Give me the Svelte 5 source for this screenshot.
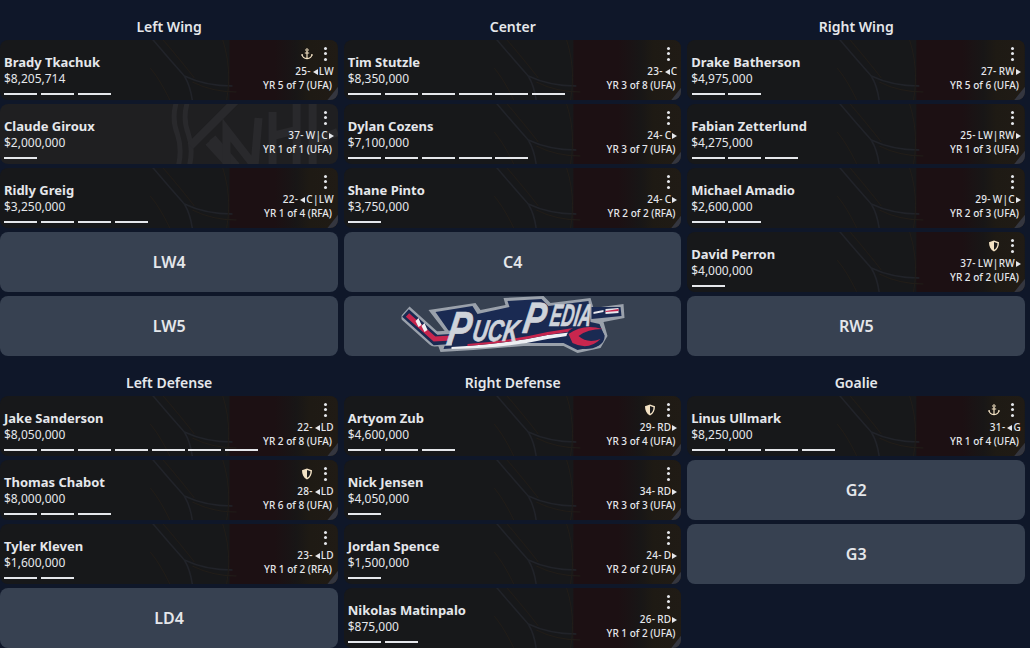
<script>
  const P = (name, salary, age, pos, dir, contract, bars, icon = '', nhl = false) => ({ name, salary, age, pos, dir, contract, bars, icon, nhl });
  const E = (slot) => ({ slot });
  const sections = [
    [
      { title: 'Left Wing', items: [
        P('Brady Tkachuk', '$8,205,714', 25, 'LW', 'l', 'YR 5 of 7 (UFA)', 3, 'anchor'),
        P('Claude Giroux', '$2,000,000', 37, 'W|C', 'r', 'YR 1 of 1 (UFA)', 1, '', true),
        P('Ridly Greig', '$3,250,000', 22, 'C|LW', 'l', 'YR 1 of 4 (RFA)', 4),
        E('LW4'), E('LW5') ] },
      { title: 'Center', items: [
        P('Tim Stutzle', '$8,350,000', 23, 'C', 'l', 'YR 3 of 8 (UFA)', 6),
        P('Dylan Cozens', '$7,100,000', 24, 'C', 'r', 'YR 3 of 7 (UFA)', 5),
        P('Shane Pinto', '$3,750,000', 24, 'C', 'r', 'YR 2 of 2 (RFA)', 1),
        E('C4'), { logo: true } ] },
      { title: 'Right Wing', items: [
        P('Drake Batherson', '$4,975,000', 27, 'RW', 'r', 'YR 5 of 6 (UFA)', 2),
        P('Fabian Zetterlund', '$4,275,000', 25, 'LW|RW', 'r', 'YR 1 of 3 (UFA)', 3),
        P('Michael Amadio', '$2,600,000', 29, 'W|C', 'r', 'YR 2 of 3 (UFA)', 2),
        P('David Perron', '$4,000,000', 37, 'LW|RW', 'r', 'YR 2 of 2 (UFA)', 1, 'shield'),
        E('RW5') ] }
    ],
    [
      { title: 'Left Defense', items: [
        P('Jake Sanderson', '$8,050,000', 22, 'LD', 'l', 'YR 2 of 8 (UFA)', 7),
        P('Thomas Chabot', '$8,000,000', 28, 'LD', 'l', 'YR 6 of 8 (UFA)', 3, 'shield'),
        P('Tyler Kleven', '$1,600,000', 23, 'LD', 'l', 'YR 1 of 2 (RFA)', 2),
        E('LD4') ] },
      { title: 'Right Defense', items: [
        P('Artyom Zub', '$4,600,000', 29, 'RD', 'r', 'YR 3 of 4 (UFA)', 3, 'shield'),
        P('Nick Jensen', '$4,050,000', 34, 'RD', 'r', 'YR 3 of 3 (UFA)', 1),
        P('Jordan Spence', '$1,500,000', 24, 'D', 'r', 'YR 2 of 2 (UFA)', 1),
        P('Nikolas Matinpalo', '$875,000', 26, 'RD', 'r', 'YR 1 of 2 (UFA)', 2) ] },
      { title: 'Goalie', items: [
        P('Linus Ullmark', '$8,250,000', 31, 'G', 'l', 'YR 1 of 4 (UFA)', 4, 'anchor'),
        E('G2'), E('G3') ] }
    ]
  ];
</script>

<svg class="defs" width="0" height="0" aria-hidden="true">
  <defs>
    <linearGradient id="redfade" x1="0" x2="1" y1="0" y2="0">
      <stop offset="0" stop-color="#1c1013"/>
      <stop offset=".42" stop-color="#1c1013"/>
      <stop offset=".62" stop-color="#181616"/>
      <stop offset=".74" stop-color="#1e1a14"/>
      <stop offset="1" stop-color="#201b15"/>
    </linearGradient>
  </defs>
</svg>

<main class="page">
  {#each sections as row}
    <section class="row">
      {#each row as col}
        <div class="col">
          <h2>{col.title}</h2>
          {#each col.items as it}
            {#if it.slot}
              <div class="slot">{it.slot}</div>
            {:else if it.logo}
              <div class="slot logo">
                <svg viewBox="0 0 226 62" width="226" height="62" aria-label="PuckPedia">
                  <path d="M27 16 L74 9 L79 16 L104 11 L102 4 L142 2 L149 9 L189 4 L192 14 L222 10 L223 24 L202 28 L206 42 L199 54 L176 59 L162 52 L122 52 L72 56 L39 58 L36 50 L44 38 Z" fill="#9aa1ab"/>
                  <path d="M34 18 L71 12 L76 20 L108 13 L106 7 L140 5 L147 12 L187 7 L189 28 L198 30 L203 42 L196 52 L176 56 L162 49 L122 49 L70 53 L42 55 L48 38 Z" fill="#1a2a52"/>
                  <path d="M3 18 L33 45 L50 44" fill="none" stroke="#9aa1ab" stroke-width="15" stroke-linejoin="round"/>
                  <path d="M4 19 L34 46 L49 45" fill="none" stroke="#1a2a52" stroke-width="10"/>
                  <path d="M6 21 L33 45 L50 44" fill="none" stroke="#c8264e" stroke-width="5"/>
                  <path d="M14 27 L17 24 L20 31 L17 33 Z M20 32 L23 29 L26 36 L23 38 Z" fill="#f0f0f4"/>
                  <path d="M50 53 Q105 50 146 41 L172 38 L172 41 L146 45 Q105 54 50 55 Z" fill="#eef0f4"/>
                  <path d="M66 50 Q108 47 146 38 L172 34 L172 37 L146 41 Q108 49 66 52 Z" fill="#c8264e"/>
                  <ellipse cx="184" cy="43" rx="19" ry="12" fill="#1a2a52"/>
                  <path d="M167 40 Q182 29 201 35 Q186 35 177 42 Q186 50 199 45 Q187 57 171 49 Z" fill="#c8264e"/>
                  <path d="M190 13 L219 13 L220 22 L190 25 Z" fill="#1a2a52"/>
                  <path d="M192 18 L202 16 L202 18 L192 20 Z M204 15 L217 14 L217 19 L204 20 Z" fill="#e9e9ee"/>
                  <path d="M204 17 L217 15 L217 17 L204 18 Z" fill="#c8264e"/>
                  <text x="44" y="51" textLength="23" lengthAdjust="spacingAndGlyphs" class="lt lt1" transform="skewX(-10) translate(9 0)">P</text>
                  <text x="70" y="47" textLength="46" lengthAdjust="spacingAndGlyphs" class="lt lt2" transform="skewX(-10) translate(8 0)">UCK</text>
                  <text x="120" y="39" textLength="22" lengthAdjust="spacingAndGlyphs" class="lt lt3" transform="skewX(-10) translate(7 0)">P</text>
                  <text x="147" y="32" textLength="41" lengthAdjust="spacingAndGlyphs" class="lt lt4" transform="skewX(-10) translate(6 0)">EDIA</text>
                </svg>
              </div>
            {:else}
              <article class="card" class:nhl={it.nhl}>
                <svg class="bg" viewBox="0 0 337 60" preserveAspectRatio="none" aria-hidden="true">
                  {#if it.nhl}
                    <g fill="none" stroke="#29292c" stroke-width="5">
                      <path d="M176 -2 Q171 15 177 30 Q182 45 178 62"/>
                      <path d="M187 -2 Q182 15 188 30 Q193 45 189 62"/>
                    </g>
                    <g fill="none" stroke="#29292c" stroke-width="8">
                      <path d="M190 42 L236 -4"/>
                      <path d="M208 38 L230 62 M212 34 L236 62"/>
                      <path d="M226 62 L226 26 L254 62 L258 14"/>
                      <path d="M272 62 L272 8 M296 62 L296 -2 M272 32 L296 26"/>
                      <path d="M312 62 L312 -2 M312 38 L337 28"/>
                    </g>
                  {:else}
                    <rect x="229" y="0" width="108" height="60" fill="url(#redfade)"/>
                    <g fill="none" stroke="#212329" stroke-width="1.600">
                      <path d="M152 -1 Q168 18 184 36 Q190 46 192 61"/>
                      <path d="M184 36 Q205 46 232 46"/>
                    </g>
                    <g fill="none" stroke="#211d19" stroke-width="1">
                      <path d="M162 -1 Q180 20 194 38"/>
                      <path d="M170 61 Q160 40 150 28"/>
                      <path d="M192 42 Q212 52 236 52"/>
                      <path d="M222 -1 Q232 30 226 61"/>
                    </g>
                    <path d="M326 61 L338 46 L338 61 Z" fill="#34363f"/>
                  {/if}
                </svg>
                <div class="left">
                  <div class="name">{it.name}</div>
                  <div class="salary">{it.salary}</div>
                  <div class="bars">{#each Array(it.bars) as _}<i></i>{/each}</div>
                </div>
                <div class="right">
                  <div class="icons">
                    {#if it.icon === 'anchor'}
                      <svg class="ic" viewBox="0 0 12 12"><circle cx="6" cy="2" r="1.200" fill="none" stroke="#f3e2c4" stroke-width="1"/><path d="M6 3.200V10.500M3.800 5h4.400M1 6.500C1.300 9 3.500 10.400 6 10.600 8.500 10.400 10.700 9 11 6.500" fill="none" stroke="#f3e2c4" stroke-width="1.200"/><path d="M0 7.500 1 5.800 2.300 7.300ZM12 7.500 11 5.800 9.700 7.300Z" fill="#f3e2c4"/></svg>
                    {:else if it.icon === 'shield'}
                      <svg class="ic" viewBox="0 0 12 12"><path d="M6 .5 11 2.200C11 6.500 9.500 9.800 6 11.500 2.500 9.800 1 6.500 1 2.200Z" fill="#f3e2c4"/><path d="M6 2 9.500 3.200C9.400 6.300 8.400 8.400 6 9.800Z" fill="#1b1b1c"/></svg>
                    {/if}
                    <span class="dots"><b></b><b></b><b></b></span>
                  </div>
                  <div class="meta">
                    {it.age}-{#if it.dir === 'l'}<span class="tri l"></span>{:else}<span class="sp"></span>{/if}{it.pos}{#if it.dir === 'r'}<span class="tri r"></span>{/if}
                  </div>
                  <div class="contract">{it.contract}</div>
                </div>
              </article>
            {/if}
          {/each}
        </div>
      {/each}
    </section>
  {/each}
</main>

<style>
  :global(body) {
    margin: 0;
    background: #0f1729;
  }
  .defs {
    position: absolute;
  }
  .page {
    width: 1030px;
    height: 648px;
    overflow: hidden;
    box-sizing: border-box;
    padding: 17px 5px 0 .3px;
    font-family: "Noto Sans", "Open Sans", sans-serif;
    color: #e5e7eb;
    display: flex;
    flex-direction: column;
    gap: 17px;
  }
  .row {
    display: grid;
    grid-template-columns: 337.700px 337.500px 337.500px;
    column-gap: 6px;
  }
  .col {
    display: flex;
    flex-direction: column;
    gap: 4px;
    min-width: 0;
  }
  h2 {
    margin: 0;
    height: 19px;
    line-height: 19px;
    text-align: center;
    font-size: 14px;
    font-weight: 600;
    color: #e5e7eb;
  }
  .slot {
    height: 60px;
    border-radius: 8px;
    background: #374151;
    display: flex;
    align-items: center;
    justify-content: center;
    font-size: 16px;
    font-weight: 600;
    color: #e5e7eb;
  }
  .logo svg {
    display: block;
    transform: translate(1.500px, -1px);
  }
  .lt {
    font-family: "Liberation Sans", sans-serif;
    font-style: italic;
    font-weight: 700;
    fill: #cfd3da;
    stroke: #cfd3da;
    stroke-width: .7px;
  }
  .lt1 { font-size: 48px; }
  .lt2 { font-size: 30px; }
  .lt3 { font-size: 44px; }
  .lt4 { font-size: 31px; }
  .card {
    position: relative;
    height: 60px;
    border-radius: 8px;
    background: #17181a;
    overflow: hidden;
    display: flex;
    justify-content: space-between;
  }
  .card.nhl { background: #1f1f21; }
  .bg {
    position: absolute;
    inset: 0;
    width: 100%;
    height: 100%;
  }
  .left, .right { position: relative; }
  .left {
    flex: 1;
    min-width: 0;
    padding: 14px 0 0 3.700px;
  }
  .name {
    font-size: 13px;
    line-height: 17px;
    font-weight: 700;
    color: #e5e7eb;
  }
  .salary {
    font-size: 12px;
    line-height: 16px;
    color: #e5e7eb;
  }
  .bars {
    display: flex;
    gap: 3.800px;
    margin: 6px 0 0 .5px;
  }
  .bars i {
    flex: none;
    width: 33px;
    height: 2px;
    background: #e5e7eb;
  }
  .right {
    width: 130px;
    padding: 5px 4px 0 0;
    text-align: right;
    font-size: 10px;
    font-weight: 500;
    line-height: 14px;
    color: #e5e7eb;
    box-sizing: border-box;
  }
  .icons {
    height: 17px;
    display: flex;
    align-items: center;
    justify-content: flex-end;
    gap: 11px;
    padding-right: 7px;
  }
  .ic {
    width: 12px;
    height: 12px;
  }
  .dots {
    display: flex;
    flex-direction: column;
    gap: 2.500px;
  }
  .dots b {
    width: 3px;
    height: 3px;
    border-radius: 50%;
    background: #e5e7eb;
  }
  .meta {
    margin-top: 2px;
    letter-spacing: .3px;
  }
  .contract {
    padding-right: 2px;
  }
  .sp {
    display: inline-block;
    width: 2px;
  }
  .tri {
    display: inline-block;
    width: 0;
    height: 0;
    border-top: 3.500px solid transparent;
    border-bottom: 3.500px solid transparent;
    margin: 0 1px 0 2px;
  }
  .tri.l { border-right: 5px solid #e5e7eb; }
  .tri.r { border-left: 5px solid #e5e7eb; margin: 0 0 0 1px; }
</style>
